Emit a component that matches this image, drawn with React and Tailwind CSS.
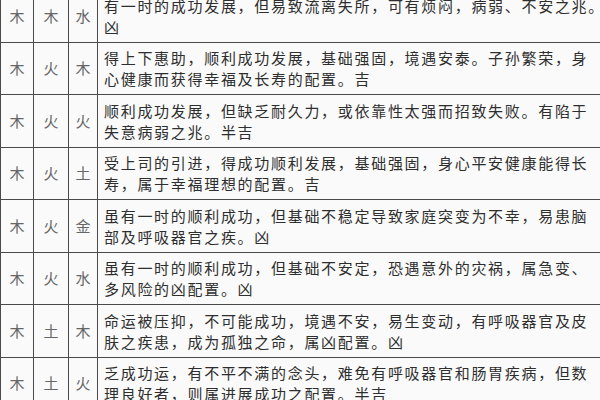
const ROWS = [
  ["木", "木", "水", "有一时的成功发展，但易致流离失所，可有烦闷，病弱、不安之兆。", "凶"],
  ["木", "火", "木", "得上下惠助，顺利成功发展，基础强固，境遇安泰。子孙繁荣，身", "心健康而获得幸福及长寿的配置。吉"],
  ["木", "火", "火", "顺利成功发展，但缺乏耐久力，或依靠性太强而招致失败。有陷于", "失意病弱之兆。半吉"],
  ["木", "火", "土", "受上司的引进，得成功顺利发展，基础强固，身心平安健康能得长", "寿，属于幸福理想的配置。吉"],
  ["木", "火", "金", "虽有一时的顺利成功，但基础不稳定导致家庭突变为不幸，易患脑", "部及呼吸器官之疾。凶"],
  ["木", "火", "水", "虽有一时的顺利成功，但基础不安定，恐遇意外的灾祸，属急变、", "多风险的凶配置。凶"],
  ["木", "土", "木", "命运被压抑，不可能成功，境遇不安，易生变动，有呼吸器官及皮", "肤之疾患，成为孤独之命，属凶配置。凶"],
  ["木", "土", "火", "乏成功运，有不平不满的念头，难免有呼吸器官和肠胃疾病，但数", "理良好者，则属进展成功之配置。半吉"],
];

function Row({ row }) {
  const [a, b, c, l1, l2] = row;
  return (
    <div className="grid grid-cols-[33px_35px_29px_1fr] h-[52.5px] border-b-[1.5px] border-[#4a4a4a]">
      {[a, b, c].map((ch, i) => (
        <div
          key={i}
          className="flex items-center justify-center border-r-[1.5px] border-[#4a4a4a] text-[15px] text-[#666]"
        >
          {ch}
        </div>
      ))}
      <div className="flex flex-col justify-center pl-[6px] text-[15px] leading-[21px] tracking-[1.7px] text-[#2e2e2e] whitespace-nowrap">
        <span>{l1}</span>
        <span>{l2}</span>
      </div>
    </div>
  );
}

export default function App() {
  return (
    <div
      className="w-[600px] h-[400px] overflow-hidden bg-[#fafafa]"
      style={{ fontFamily: '"Noto Sans CJK SC", sans-serif' }}
    >
      <div className="-mt-[10px] border-l-[1.5px] border-[#4a4a4a] w-[640px]">
        {ROWS.map((r, i) => (
          <Row key={i} row={r} />
        ))}
      </div>
    </div>
  );
}
